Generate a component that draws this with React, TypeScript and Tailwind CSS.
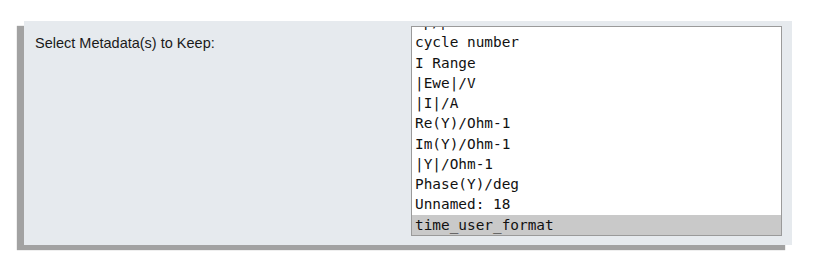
import React from "react";

const columns = [
  "Cp/µF",
  "cycle number",
  "I Range",
  "|Ewe|/V",
  "|I|/A",
  "Re(Y)/Ohm-1",
  "Im(Y)/Ohm-1",
  "|Y|/Ohm-1",
  "Phase(Y)/deg",
  "Unnamed: 18",
  "time_user_format",
];

const selected = "time_user_format";

export default function App() {
  return (
    <div className="h-[266px] w-[818px] bg-white pl-[24px] pt-[21px]">
      <div className="flex h-[224px] w-[768px] items-start justify-between bg-[#e6eaee] pl-[11px] pr-[10px] pt-[5px] shadow-[-7px_5px_1px_#a2a2a2]">
        <label className="mt-[7px] font-['Liberation_Sans',Arial,sans-serif] text-[14.5px] leading-[20px] text-[#1a1a1a]">
          Select Metadata(s) to Keep:
        </label>
        <div className="h-[210px] w-[371px] overflow-hidden border border-[#9a9a9a] bg-white">
          <ul className="-mt-[15px] font-['DejaVu_Sans_Mono',monospace] text-[14.4px] leading-[20.25px] text-[#111]">
            {columns.map((c) => (
              <li
                key={c}
                className={
                  c === selected
                    ? "whitespace-pre bg-[#c9c9c9] pl-[3px]"
                    : "whitespace-pre pl-[3px]"
                }
              >
                {c}
              </li>
            ))}
          </ul>
        </div>
      </div>
    </div>
  );
}
